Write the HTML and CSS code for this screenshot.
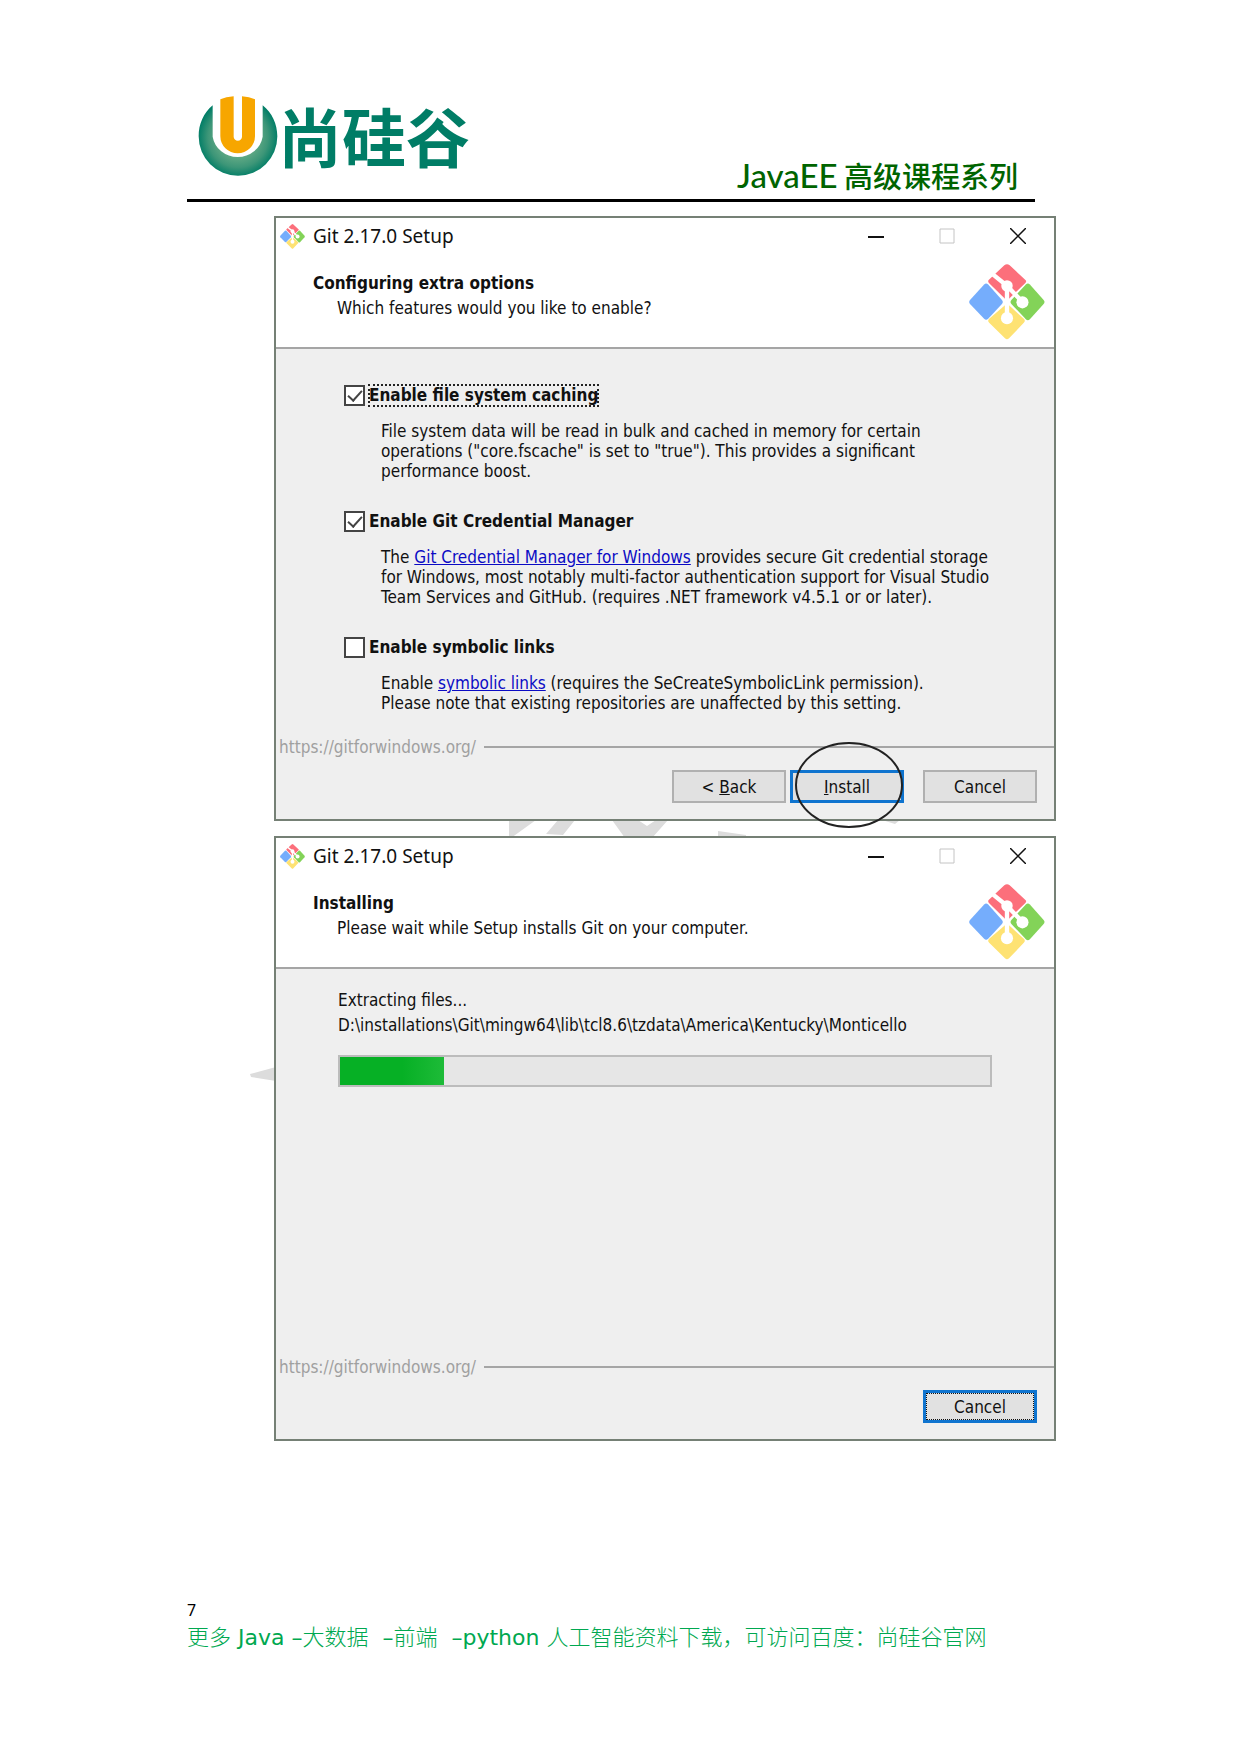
FILE: index.html
```html
<!DOCTYPE html>
<html lang="zh-CN">
<head>
<meta charset="utf-8">
<meta name="viewport" content="width=device-width, initial-scale=1">
<title>JavaEE 高级课程系列</title>
<link rel="stylesheet" href="styles.css">
</head>
<body>
<svg class="symbols" aria-hidden="true">
  <symbol id="git-logo" viewBox="0 0 226 226">
    <path fill="#fc6f7b" d="M105 4q8-6 16 0l46 43q6 5 0 10l-48 46q-6 4-12 0L60 57q-6-6 0-11z"/>
    <path fill="#75adfc" d="M45 61q6-6 12 0l41 46q5 6 0 12l-41 44q-6 6-12 0L3 119q-5-6 0-12z"/>
    <path fill="#fee273" d="M107 123q6-5 12 0l44 40q6 6 0 12l-44 46q-6 6-12 0l-47-46q-6-6 0-12z"/>
    <path fill="#83d358" d="M169 61q6-6 12 0l41 46q5 6 0 12l-41 45q-6 6-12 0l-43-45q-5-6 0-12z"/>
    <path fill="none" stroke="#fff" stroke-width="13" d="M60 22l53 43v96M113 65l46 48"/>
    <circle cx="113" cy="65" r="17" fill="#fff"/>
    <circle cx="159" cy="114" r="18" fill="#fff"/>
    <circle cx="113" cy="161" r="18" fill="#fff"/>
  </symbol>
</svg>

<div class="page">
  <header class="page-header">
    <div class="brand">
      <svg class="brand-mark" viewBox="0 0 240 240" aria-hidden="true">
        <defs>
          <radialGradient id="ring" cx="120" cy="124" r="120" gradientUnits="userSpaceOnUse">
            <stop offset="0.5" stop-color="#5fa884"/>
            <stop offset="0.75" stop-color="#3d9678"/>
            <stop offset="1" stop-color="#007d66"/>
          </radialGradient>
        </defs>
        <path fill="url(#ring)" d="M44 28v94a76 73 0 0 0 150 0V28C222 50 238 84 238 121a118 118 0 0 1-236 0C2 84 16 52 44 28z"/>
        <path fill="#f7a600" d="M67 10Q84 2 107 1V122a12 12 0 0 0 25 0V1q22 1 39 9v111a52 51 0 0 1-104 0z"/>
      </svg>
      <span class="brand-name">尚硅谷</span>
    </div>
    <h1 class="course-title"><span class="course-latin">JavaEE</span> 高级课程系列</h1>
  </header>

  <main class="steps">
    <svg class="watermark" viewBox="0 0 806 605" aria-hidden="true">
      <path d="M259 -6H286L261 12H259zM308 -6H325L313 9L296 8zM362 -6H388L397 0L406 -6H418L402 12H375zM468 5L496 9V12H468zM632 -6H650L645 -2z"/>
      <path d="M0 248L26 241V255L1 251z"/>
    </svg>

    <section class="window" aria-label="Configuring extra options">
      <div class="title-bar">
        <svg class="title-icon" aria-hidden="true"><use href="#git-logo"/></svg>
        <span class="title-text">Git 2.17.0 Setup</span>
        <div class="window-controls">
          <button type="button" aria-label="Minimize"><svg viewBox="0 0 16 16"><path d="M0 9H16" stroke="#111" stroke-width="2"/></svg></button>
          <button type="button" aria-label="Maximize" disabled><svg viewBox="0 0 16 16"><path d="M1 1H15V15H1z" fill="none" stroke="#c4c4c4"/></svg></button>
          <button type="button" aria-label="Close"><svg viewBox="0 0 16 16"><path d="M0 0L16 16M16 0L0 16" stroke="#111" stroke-width="1.5"/></svg></button>
        </div>
      </div>
      <div class="banner">
        <div class="banner-text">
          <h2>Configuring extra options</h2>
          <p>Which features would you like to enable?</p>
        </div>
        <svg class="banner-logo" aria-hidden="true"><use href="#git-logo"/></svg>
      </div>
      <form class="content options">
        <div class="option">
          <div class="option-head"><input type="checkbox" id="cache" checked><label for="cache" class="focused">Enable file system caching</label></div>
          <p>File system data will be read in bulk and cached in memory for certain<br>operations ("core.fscache" is set to "true"). This provides a significant<br>performance boost.</p>
        </div>
        <div class="option">
          <div class="option-head"><input type="checkbox" id="credential" checked><label for="credential">Enable Git Credential Manager</label></div>
          <p>The <a href="#credential">Git Credential Manager for Windows</a> provides secure Git credential storage<br>for Windows, most notably multi-factor authentication support for Visual Studio<br>Team Services and GitHub. (requires .NET framework v4.5.1 or or later).</p>
        </div>
        <div class="option">
          <div class="option-head"><input type="checkbox" id="symlinks"><label for="symlinks">Enable symbolic links</label></div>
          <p>Enable <a href="#symlinks">symbolic links</a> (requires the SeCreateSymbolicLink permission).<br>Please note that existing repositories are unaffected by this setting.</p>
        </div>
      </form>
      <div class="divider">https://gitforwindows.org/</div>
      <div class="actions">
        <button type="button" class="push">&lt; <u>B</u>ack</button>
        <span class="marked">
          <button type="button" class="push default"><u>I</u>nstall</button>
          <svg class="marker" viewBox="0 0 108 86" aria-hidden="true"><ellipse cx="54" cy="43" rx="53" ry="42"/></svg>
        </span>
        <button type="button" class="push cancel">Cancel</button>
      </div>
    </section>

    <section class="window" aria-label="Installing">
      <div class="title-bar">
        <svg class="title-icon" aria-hidden="true"><use href="#git-logo"/></svg>
        <span class="title-text">Git 2.17.0 Setup</span>
        <div class="window-controls">
          <button type="button" aria-label="Minimize"><svg viewBox="0 0 16 16"><path d="M0 9H16" stroke="#111" stroke-width="2"/></svg></button>
          <button type="button" aria-label="Maximize" disabled><svg viewBox="0 0 16 16"><path d="M1 1H15V15H1z" fill="none" stroke="#c4c4c4"/></svg></button>
          <button type="button" aria-label="Close"><svg viewBox="0 0 16 16"><path d="M0 0L16 16M16 0L0 16" stroke="#111" stroke-width="1.5"/></svg></button>
        </div>
      </div>
      <div class="banner">
        <div class="banner-text">
          <h2>Installing</h2>
          <p>Please wait while Setup installs Git on your computer.</p>
        </div>
        <svg class="banner-logo" aria-hidden="true"><use href="#git-logo"/></svg>
      </div>
      <div class="content status">
        <label for="extract">Extracting files...<br>D:\installations\Git\mingw64\lib\tcl8.6\tzdata\America\Kentucky\Monticello</label>
        <progress id="extract" value="16" max="100"></progress>
      </div>
      <div class="divider">https://gitforwindows.org/</div>
      <div class="actions">
        <button type="button" class="push default focus-ring">Cancel</button>
      </div>
    </section>
  </main>

  <footer class="page-footer">
    <div class="page-number">7</div>
    <p>更多<span class="latin"> Java –</span>大数据<span class="latin">&nbsp; –</span>前端<span class="latin">&nbsp; –python </span>人工智能资料下载，可访问百度：尚硅谷官网</p>
  </footer>
</div>
</body>
</html>
```
FILE: styles.css
```css
* {
  box-sizing: border-box;
}

body {
  margin: 0;
  background: #fff;
  color: #111;
  font-family: "DejaVu Sans Condensed", "DejaVu Sans", sans-serif;
  font-size: 17px;
}

h1,
h2,
p {
  margin: 0;
}

.symbols {
  position: absolute;
  width: 0;
  height: 0;
}

.page {
  padding: 96px 184px 80px 187px;
}

/* Running header */
.page-header {
  display: flex;
  justify-content: space-between;
  align-items: flex-end;
  height: 106px;
  margin-right: 21px;
  border-bottom: 3px solid #000;
}

.brand {
  display: flex;
  align-items: flex-start;
  align-self: flex-start;
  padding-left: 11px;
}

.brand-mark {
  width: 80px;
  height: 80px;
}

.brand-name {
  color: #007d66;
  font: 700 64px/76px "Noto Sans CJK SC", sans-serif;
}

.course-title {
  padding: 0 17px 4px 0;
  color: #006400;
  font: 500 29px/40px "Noto Sans CJK SC", sans-serif;
  white-space: nowrap;
}

.course-latin {
  font-family: Lato, sans-serif;
  font-size: 33px;
}

/* Wizard windows */
.steps {
  position: relative;
  display: flex;
  flex-direction: column;
  gap: 15px;
  padding: 14px 0 0 87px;
}

.watermark {
  position: absolute;
  top: 624px;
  left: 63px;
  width: 806px;
  height: 605px;
  fill: #dcdcdc;
  overflow: visible;
}

.window {
  position: relative;
  display: flex;
  flex-direction: column;
  min-height: 605px;
  border: 2px solid #758075;
  background: #efefef;
}

.title-bar {
  display: flex;
  align-items: center;
  height: 36px;
  padding: 0 28px 0 4px;
  background: #fff;
}

.title-icon {
  width: 25px;
  height: 25px;
}

.title-text {
  flex: 1;
  padding-left: 8px;
  font: 19px/24px "Noto Sans", sans-serif;
}

.window-controls {
  display: flex;
  gap: 55px;
}

.window-controls button {
  display: flex;
  width: 16px;
  height: 16px;
  padding: 0;
  border: 0;
  background: none;
}

.window-controls svg {
  width: 16px;
  height: 16px;
}

.banner {
  display: flex;
  justify-content: space-between;
  padding: 10px 9px 7px 37px;
  border-bottom: 2px solid #a5a5a5;
  background: #fff;
}

.banner-text {
  padding-top: 7px;
  line-height: 25px;
}

.banner-text h2 {
  font-size: 17px;
  line-height: 25px;
}

.banner-text p {
  padding-left: 24px;
}

.banner-logo {
  width: 76px;
  height: 76px;
}

.content {
  flex: 1;
}

.options {
  display: flex;
  flex-direction: column;
  gap: 30px;
  padding: 36px 60px 20px 68px;
}

.option {
  display: flex;
  flex-direction: column;
  gap: 15px;
}

.option-head {
  display: flex;
  align-items: center;
  gap: 4px;
}

.option-head input {
  appearance: none;
  display: grid;
  place-items: center;
  width: 21px;
  height: 21px;
  margin: 0;
  border: 2px solid #444;
  background: #fff;
}

.option-head input:checked::after {
  content: "";
  width: 6px;
  height: 12px;
  margin-bottom: 4px;
  border: solid #444;
  border-width: 0 2px 2px 0;
  transform: rotate(42deg);
}

.option-head label {
  font-weight: 700;
  line-height: 21px;
}

.option-head .focused {
  outline: 2px dotted #222;
  outline-offset: -1px;
}

.option p {
  padding-left: 37px;
  line-height: 20px;
  white-space: nowrap;
}

a {
  color: #0b0bc4;
}

.status {
  display: flex;
  flex-direction: column;
  gap: 17px;
  padding: 19px 62px 0;
  line-height: 25px;
}

progress {
  appearance: none;
  width: 100%;
  height: 32px;
  border: 2px solid #bcbcbc;
  background: #e6e6e6;
}

progress::-webkit-progress-bar {
  background: #e6e6e6;
}

progress::-webkit-progress-value {
  background: linear-gradient(90deg, #06b025 60%, #1ebb38);
}

.divider {
  display: flex;
  align-items: center;
  gap: 8px;
  padding-left: 3px;
  color: #a0a0a0;
  line-height: 24px;
}

.divider::after {
  content: "";
  flex: 1;
  height: 2px;
  background: #a5a5a5;
}

.actions {
  display: flex;
  justify-content: flex-end;
  gap: 4px;
  padding: 11px 17px 16px;
}

.push {
  display: block;
  width: 114px;
  height: 33px;
  padding: 0;
  border: 2px solid #b0b0b0;
  background: #e1e1e1;
  color: #111;
  font: inherit;
}

.push.default {
  border: 3px solid #0f74cf;
}

.push.cancel {
  margin-left: 15px;
}

.focus-ring {
  outline: 1px dotted #111;
  outline-offset: -4px;
}

.marked {
  position: relative;
}

.marker {
  position: absolute;
  top: -28px;
  left: 5px;
  z-index: 1;
  width: 108px;
  height: 86px;
  fill: none;
  stroke: #222;
  stroke-width: 2;
  pointer-events: none;
}

/* Running footer */
.page-footer {
  padding-top: 157px;
  color: #00a850;
  font: 300 22px/26px "Noto Sans CJK SC", sans-serif;
  white-space: nowrap;
}

.page-number {
  color: #000;
  font: 16px/24px "Noto Sans", sans-serif;
}

.latin {
  font-family: "DejaVu Sans", sans-serif;
  font-weight: 400;
}
```
